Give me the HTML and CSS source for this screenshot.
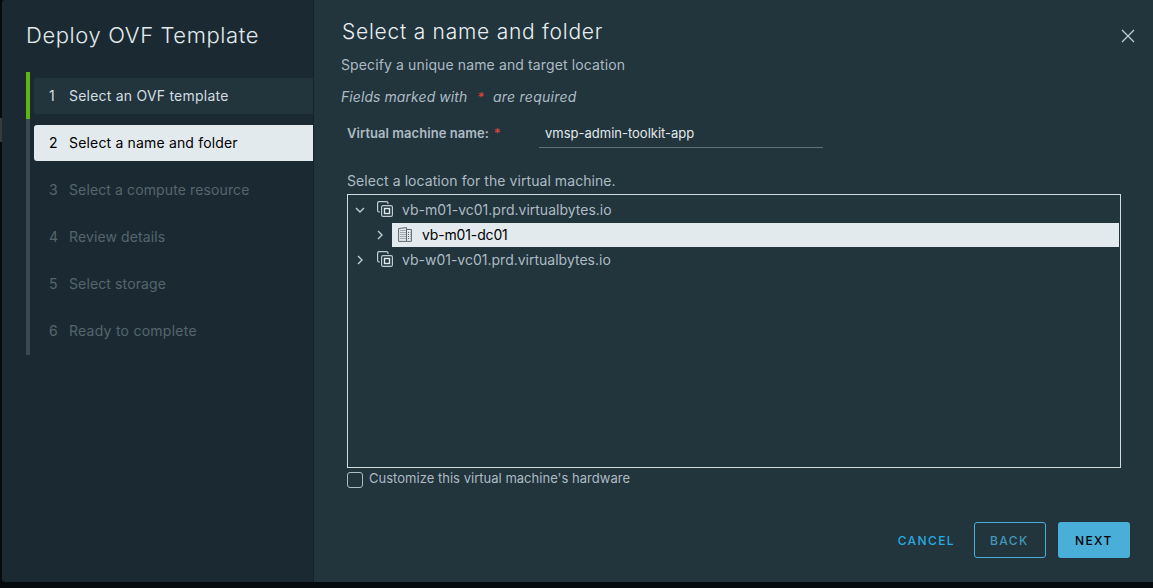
FILE: index.html
```html
<!DOCTYPE html>
<html lang="en">
<head>
<meta charset="utf-8">
<title>Deploy OVF Template</title>
<link rel="stylesheet" href="styles.css">
</head>
<body>
<div class="wizard">
  <nav class="sidebar">
    <h1 class="wizard-title">Deploy OVF Template</h1>
    <ol class="steps">
      <li class="step done"><div class="step-box"><span class="num">1</span><span>Select an OVF template</span></div></li>
      <li class="step current"><div class="step-box"><span class="num">2</span><span>Select a name and folder</span></div></li>
      <li class="step"><div class="step-box"><span class="num">3</span><span>Select a compute resource</span></div></li>
      <li class="step"><div class="step-box"><span class="num">4</span><span>Review details</span></div></li>
      <li class="step"><div class="step-box"><span class="num">5</span><span>Select storage</span></div></li>
      <li class="step ready"><div class="step-box"><span class="num">6</span><span>Ready to complete</span></div></li>
    </ol>
  </nav>
  <main class="content">
    <header class="page-head">
      <h2 class="page-title">Select a name and folder</h2>
      <svg class="close" viewBox="0 0 14 14"><path d="M1 1L13 13M13 1L1 13"/></svg>
    </header>
    <p class="subtitle">Specify a unique name and target location</p>
    <p class="required-note"><span>Fields marked with</span><span class="star">*</span><span class="note-end">are required</span></p>
    <div class="field">
      <label class="field-label">Virtual machine name:</label><span class="star">*</span>
      <div class="field-input">vmsp-admin-toolkit-app</div>
    </div>
    <p class="tree-label">Select a location for the virtual machine.</p>
    <div class="tree">
      <div class="row">
        <svg class="caret" viewBox="0 0 10 10"><path d="M1 3L5 7L9 3"/></svg>
        <svg class="vc" viewBox="0 0 16 16"><path d="M3 11H2Q.6 11 .6 9.500V2Q.6 .6 2 .6H9.500Q11 .6 11 2V3"/><rect x="4.600" y="4.600" width="10.800" height="10.800" rx="1.500"/><rect class="core" x="7.500" y="7.500" width="5" height="5"/></svg>
        <span class="row-text">vb-m01-vc01.prd.virtualbytes.io</span>
      </div>
      <div class="row child">
        <svg class="caret" viewBox="0 0 10 10"><path d="M3 1L7 5L3 9"/></svg>
        <div class="selected">
          <svg class="dc" viewBox="0 0 14 15"><path d="M.6 14.400V1.500L8.500 .6V14.400ZM8.500 2.500H13.400V14.400H8.500"/><path class="windows" d="M2.500 3.500H7.500M2.500 5.500H7.500M2.500 7.500H7.500M2.500 9.500H7.500M2.500 11.500H7.500M10 5.500H12.500M10 7.500H12.500M10 9.500H12.500M10 11.500H12.500"/></svg>
          <span class="row-text">vb-m01-dc01</span>
        </div>
      </div>
      <div class="row">
        <svg class="caret" viewBox="0 0 10 10"><path d="M3 1L7 5L3 9"/></svg>
        <svg class="vc" viewBox="0 0 16 16"><path d="M3 11H2Q.6 11 .6 9.500V2Q.6 .6 2 .6H9.500Q11 .6 11 2V3"/><rect x="4.600" y="4.600" width="10.800" height="10.800" rx="1.500"/><rect class="core" x="7.500" y="7.500" width="5" height="5"/></svg>
        <span class="row-text">vb-w01-vc01.prd.virtualbytes.io</span>
      </div>
    </div>
    <div class="customize"><span class="checkbox"></span><span>Customize this virtual machine's hardware</span></div>
    <footer class="actions">
      <span class="btn link">CANCEL</span>
      <span class="btn outline">BACK</span>
      <span class="btn primary">NEXT</span>
    </footer>
  </main>
</div>
</body>
</html>
```
FILE: styles.css
```css
* { box-sizing: border-box; margin: 0; padding: 0; }
body {
  width: 1153px; height: 588px; padding-left: 2px; overflow: hidden;
  background: linear-gradient(#3a3a3a, #3a3a3a) 0 118px / 2px 24px no-repeat, #060b0f;
  font: 400 14px/20px Inter, "Open Sans", sans-serif;
  color: #adbbc4;
}
svg { display: block; flex: none; fill: none; stroke: #c1cdd4; }
.wizard { display: flex; height: 582px; border-radius: 3px 0 0 3px; overflow: hidden; }
.sidebar { width: 312px; padding: 20px 0 0 24px; background: #1b2a32; border-right: 1px solid #16232a; }
.wizard-title { height: 52px; font-size: 22px; font-weight: 300; line-height: 30px; color: #e3eaed; letter-spacing: .600px; white-space: nowrap; }
.steps { list-style: none; }
.step { height: 47px; padding: 6px 0 5px 4px; border-left: 4px solid #3a4a50; color: #56656d; letter-spacing: .12px; }
.step-box { display: flex; align-items: center; height: 36px; padding: 0 0 1px 15px; border-radius: 3px 0 0 3px; }
.num { width: 20px; }
.done { border-color: #60b515; color: #d3dde2; letter-spacing: .22px; }
.done .step-box { background: #22343c; }
.current { color: #000; letter-spacing: .17px; }
.ready { height: 48px; letter-spacing: .25px; }
.current .step-box { background: #e3eaed; }
.content { flex: 1; display: flex; flex-direction: column; padding: 17px 23px 0 27px; background: #22343c; }
.page-head { display: flex; justify-content: space-between; height: 38px; padding-left: 1px; }
.page-title { font-size: 21px; font-weight: 300; line-height: 29px; color: #e9f0f3; letter-spacing: .75px; white-space: nowrap; }
.close { width: 14px; height: 14px; margin: 12px -5px 0 0; stroke-width: 1.300; }
.subtitle { height: 32px; letter-spacing: .12px; }
.required-note { display: flex; height: 32px; font-style: italic; letter-spacing: .07px; }
.note-end { letter-spacing: .25px; }
.star { color: #e8463a; font-size: 13px; }
.required-note .star { margin: 0 9px 0 10px; }
.field { display: flex; height: 48px; padding-left: 6px; line-height: 28px; }
.field-label { font-weight: 600; font-size: 13px; margin-right: 5px; letter-spacing: .05px; }
.field .star { width: 45px; }
.field-input { width: 284px; height: 29px; padding-left: 6px; border-bottom: 1px solid #61717a; color: #e3eaed; font-size: 13px; }
.tree-label { height: 27px; padding: 4px 0 0 6px; letter-spacing: .07px; }
.tree { width: 774px; height: 274px; margin-left: 6px; padding: 2px 1px; border: 1px solid #d3dadd; }
.row { display: flex; align-items: center; height: 25px; padding-left: 6px; }
.caret { width: 10px; height: 10px; stroke-width: 1.400; }
.vc { width: 16px; height: 16px; margin: -2px 9px 0 12px; stroke-width: 1.200; }
.core { stroke: #e3eaed; stroke-width: 1.400; }
.child { padding-left: 26px; }
.selected { display: flex; flex: 1; align-items: center; height: 24px; margin-left: 7px; padding-left: 6px; background: #e3eaed; color: #000; letter-spacing: -.15px; }
.dc { width: 14px; height: 15px; margin-right: 10px; stroke: #5e686e; }
.windows { stroke-dasharray: 1 1; }
.customize { display: flex; height: 54px; padding-left: 6px; font-size: 13px; letter-spacing: .02px; }
.checkbox { width: 16px; height: 16px; margin: 4px 6px 0 0; border: 1px solid #adbbc4; border-radius: 3px; }
.actions { display: flex; justify-content: flex-end; }
.btn { height: 36px; border-radius: 3px; font-size: 12px; font-weight: 500; line-height: 38px; letter-spacing: 1.400px; }
.link { margin-right: 19px; color: #29aae1; }
.outline { width: 72px; margin-right: 12px; padding-left: 15px; line-height: 36px; border: 1px solid #49afd9; color: #4597bb; }
.primary { width: 72px; padding-left: 17px; background: #49afd9; color: #000; }
```
